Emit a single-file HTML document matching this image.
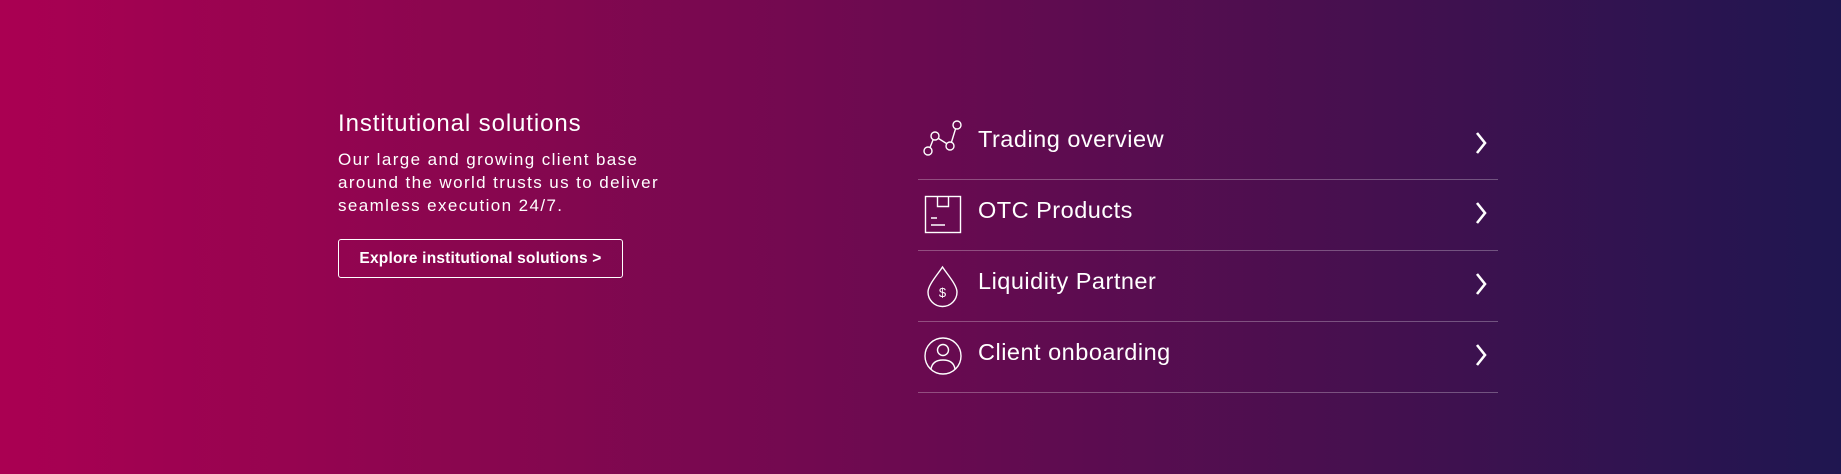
<!DOCTYPE html>
<html><head><meta charset="utf-8"><style>
html,body{margin:0;padding:0}
body{width:1841px;height:474px;overflow:hidden;position:relative;font-family:"Liberation Sans",sans-serif;color:#fff;
background:linear-gradient(90deg,#aa0052 0%,#8a064f 25%,#6a0a50 50%,#44104f 75%,#1f1650 100%);}
.h{position:absolute;left:338px;top:110px;font-size:24px;font-weight:normal;letter-spacing:0.9px}
.p{position:absolute;left:338px;top:148px;font-size:17px;line-height:23px;letter-spacing:1.4px;width:420px}
.btn{position:absolute;left:338px;top:239px;width:283px;height:37px;border:1.5px solid #fff;border-radius:3px;box-sizing:content-box;font-size:15.5px;font-weight:bold;line-height:37px;text-align:center;letter-spacing:0.2px}
.row{position:absolute;left:918px;width:580px;height:70px;border-bottom:1px solid rgba(255,255,255,0.28)}
.row .t{position:absolute;left:60px;top:-5px;height:100%;display:flex;align-items:center;font-size:23.5px;letter-spacing:0.5px}
.row svg{position:absolute}
</style></head><body>
<div class="h">Institutional solutions</div>
<div class="p">Our large and growing client base<br>around the world trusts us to deliver<br>seamless execution 24/7.</div>
<div class="btn">Explore institutional solutions &gt;</div>

<div class="row" style="top:109px">
<svg style="left:0;top:0" width="60" height="71" viewBox="918 109 60 71" fill="none" stroke="#fff" stroke-width="1.4">
<circle cx="928" cy="151" r="4"/><circle cx="935" cy="136" r="4"/><circle cx="950" cy="146" r="4"/><circle cx="957" cy="125" r="4"/>
<path d="M930 147.5L933 140M938.5 138.5L946.5 143.5M951.5 142L955.5 129"/></svg>
<div class="t">Trading overview</div>
<svg style="left:556px;top:22px" width="14" height="24" viewBox="0 0 14 24"><path d="M3 2L11 12L3 22" fill="none" stroke="#fff" stroke-width="2.6"/></svg>
</div>
<div class="row" style="top:180px">
<svg style="left:0;top:0" width="60" height="70" viewBox="918 180 60 70" fill="none" stroke="#fff" stroke-width="1.4">
<rect x="925.5" y="196.5" width="35" height="36"/><path d="M937.5 196.5V206.5H948.5V196.5M931 218H937M931 225H945"/></svg>
<div class="t">OTC Products</div>
<svg style="left:556px;top:21px" width="14" height="24" viewBox="0 0 14 24"><path d="M3 2L11 12L3 22" fill="none" stroke="#fff" stroke-width="2.6"/></svg>
</div>
<div class="row" style="top:251px">
<svg style="left:0;top:0" width="60" height="70" viewBox="918 251 60 70" fill="none" stroke="#fff" stroke-width="1.4">
<path d="M942.5 267C938 274 928 285 928 292A14.5 14.5 0 0 0 957 292C957 285 947 274 942.5 267Z"/>
<text x="942.5" y="297" font-size="13" fill="#fff" stroke="none" text-anchor="middle" font-family="Liberation Sans">$</text></svg>
<div class="t">Liquidity Partner</div>
<svg style="left:556px;top:21px" width="14" height="24" viewBox="0 0 14 24"><path d="M3 2L11 12L3 22" fill="none" stroke="#fff" stroke-width="2.6"/></svg>
</div>
<div class="row" style="top:322px">
<svg style="left:0;top:0" width="60" height="70" viewBox="918 322 60 70" fill="none" stroke="#fff" stroke-width="1.4">
<circle cx="943" cy="356" r="18"/><circle cx="943" cy="350" r="5.5"/><path d="M931 369C932 363 936 360 943 360C950 360 954 363 955 369"/></svg>
<div class="t">Client onboarding</div>
<svg style="left:556px;top:21px" width="14" height="24" viewBox="0 0 14 24"><path d="M3 2L11 12L3 22" fill="none" stroke="#fff" stroke-width="2.6"/></svg>
</div>
</body></html>
